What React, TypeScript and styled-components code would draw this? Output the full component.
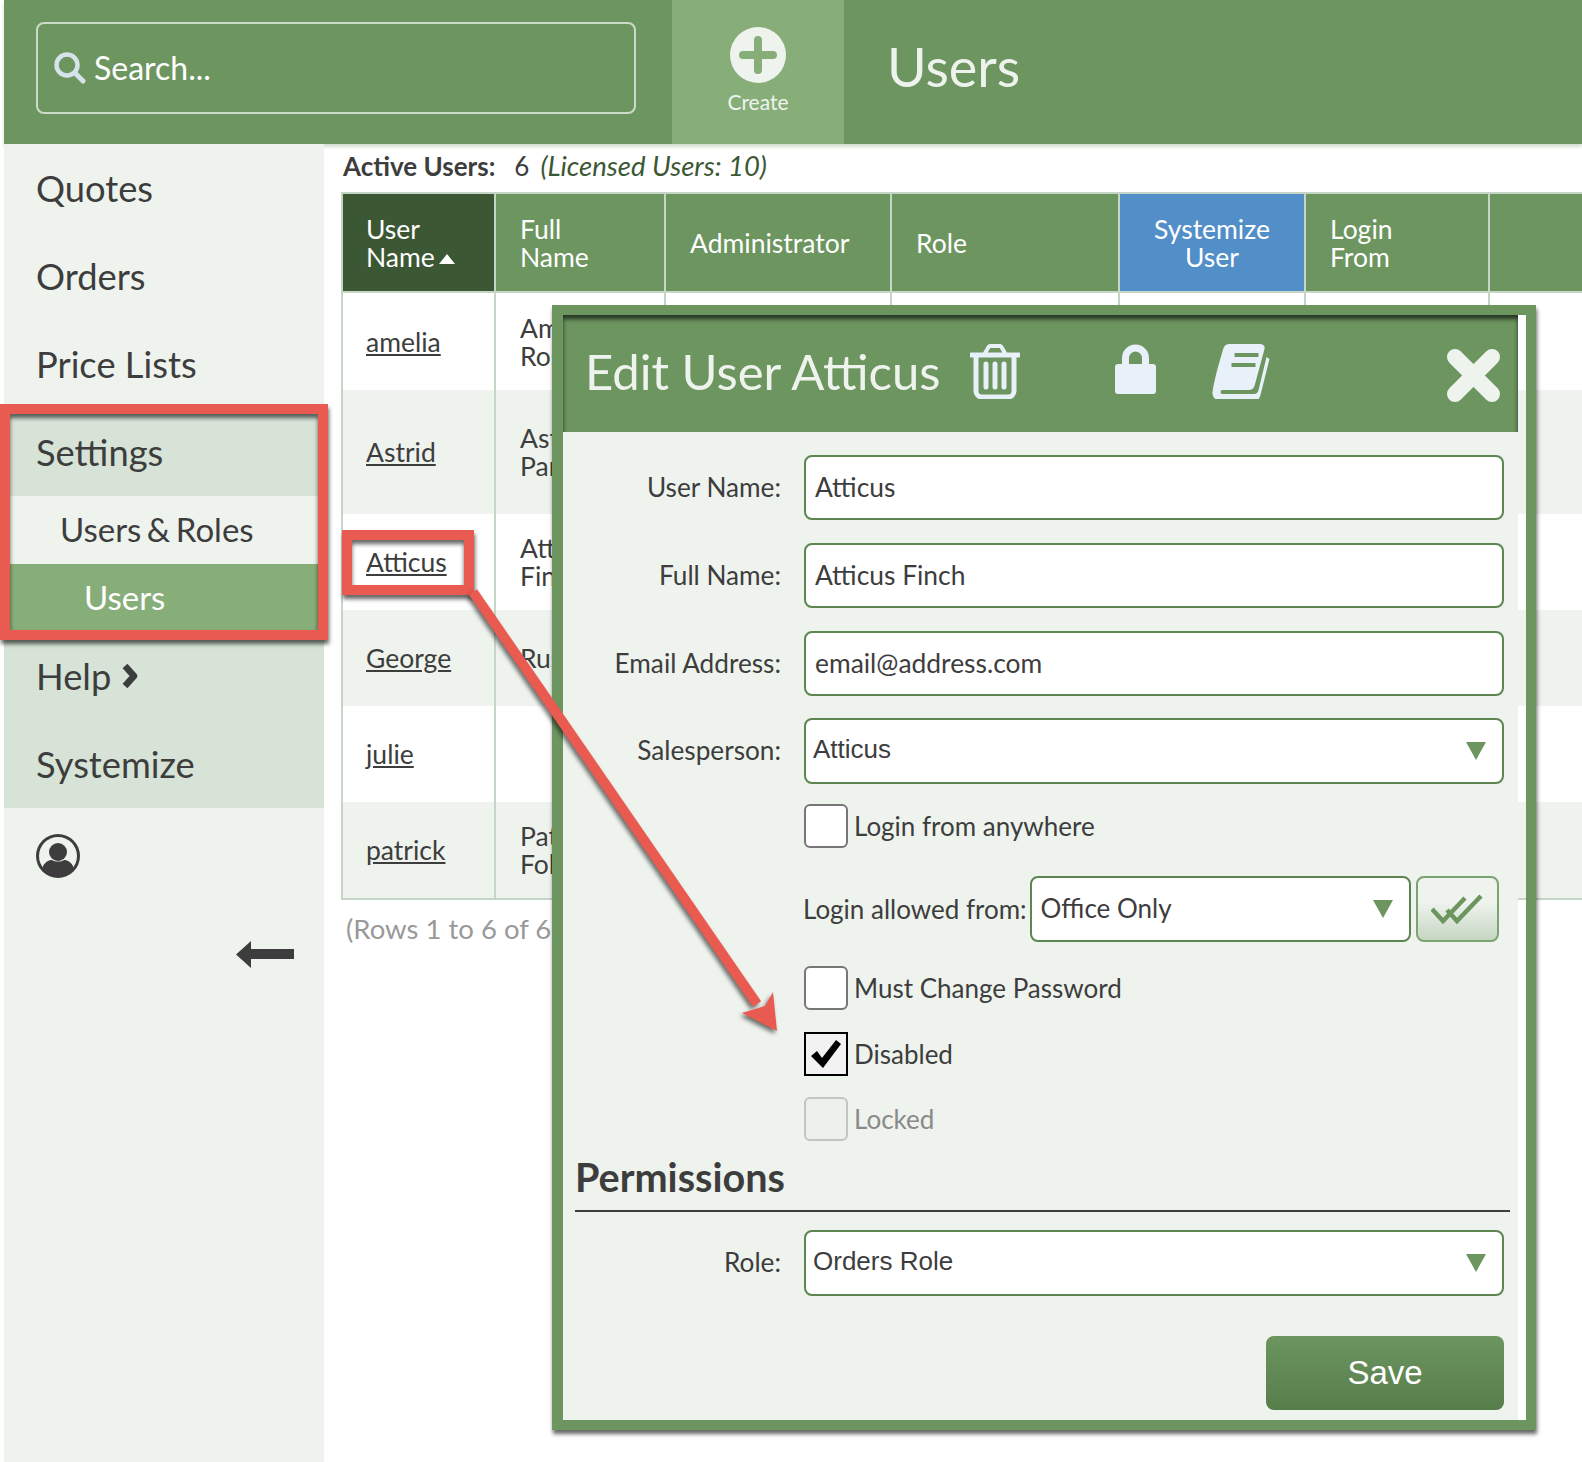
import styled, { createGlobalStyle } from 'styled-components';

const GlobalStyle = createGlobalStyle`
    html, body {
        margin: 0;
        padding: 0;
        background: #fff;
    }
    body {
        font-family: Lato, 'Open Sans', sans-serif;
        color: #3d3d3d;
    }
    * {
        box-sizing: border-box;
    }
`;

const Page = styled.div`
    position: relative;
    width: 1582px;
    height: 1462px;
    overflow: hidden;
    background: #fff;
`;
const TopBar = styled.header`
    display: flex;
    height: 144px;
    margin-left: 4px;
    background: #6c955f;
    box-shadow: 0 3px 3px rgba(108, 149, 95, 0.3);
`;
const SearchArea = styled.div`
    display: flex;
    align-items: flex-start;
    width: 668px;
    padding: 22px 0 0 32px;
`;
const SearchBox = styled.label`
    display: flex;
    align-items: center;
    gap: 6px;
    width: 600px;
    height: 92px;
    padding-left: 16px;
    border: 2px solid #cbdbc6;
    border-radius: 8px;
`;
const SearchInput = styled.input`
    flex: 1;
    min-width: 0;
    padding: 0 2px 2px;
    border: 0;
    outline: 0;
    background: transparent;
    color: #fff;
    font: 32px Lato, sans-serif;
    &::placeholder {
        color: #fff;
        opacity: 1;
    }
`;
const CreateButton = styled.div`
    display: flex;
    flex-direction: column;
    align-items: center;
    width: 172px;
    padding-top: 27px;
    background: #87ae79;
    color: #eef3ed;
    font-size: 21px;
    line-height: 38px;
`;
const PageTitle = styled.h1`
    margin: -10px 0 0 43px;
    align-self: center;
    color: #eef3ed;
    font-size: 54px;
    font-weight: 400;
    line-height: 1;
`;
const Content = styled.div`
    display: flex;
    margin-left: 4px;
`;
const Sidebar = styled.nav`
    width: 320px;
    height: 1318px;
    flex-shrink: 0;
    background: #eef3ed;
`;
const NavItem = styled.div<{ $shaded?: boolean }>`
    display: flex;
    align-items: center;
    gap: 10px;
    height: 88px;
    padding-left: 32px;
    font-size: 36.3px;
    background: ${(props) => (props.$shaded ? '#d6e3d6' : 'transparent')};
`;
const SubItem = styled.div<{ $active?: boolean; $indent: number }>`
    display: flex;
    align-items: center;
    height: 68px;
    padding: 0 0 ${(props) => (props.$active ? 3 : 2)}px ${(props) => props.$indent}px;
    font-size: 33px;
    word-spacing: -3px;
    background: ${(props) => (props.$active ? '#87ae79' : 'transparent')};
    color: ${(props) => (props.$active ? '#fff' : 'inherit')};
`;
const ProfileIcon = styled.div`
    height: 70px;
    padding: 26px 0 0 32px;
`;
const CollapseArrow = styled.div`
    display: flex;
    justify-content: flex-end;
    padding: 63px 30px 0 0;
`;
const Main = styled.main`
    flex: 1;
    min-width: 0;
    padding: 2px 0 0 17px;
`;
const Summary = styled.div`
    display: flex;
    align-items: center;
    gap: 19px;
    height: 46px;
    padding: 0 0 7px 2px;
    font-size: 26px;
    b {
        font-weight: 700;
    }
    em {
        margin-left: -8px;
        color: #3b5733;
        font-size: 27.5px;
    }
`;
const Grid = styled.table`
    width: 1240px;
    table-layout: fixed;
    border-collapse: collapse;
    font-size: 26.5px;
    line-height: 28px;
    border-left: 2px solid #c6d6c6;
    border-bottom: 2px solid #c6d6c6;
    border-top: 2px solid #c6d6c6;
    th:first-child,
    td:first-child {
        padding-left: 23px;
    }
`;
const HeadCell = styled.th<{ $tone?: 'dark' | 'blue'; $center?: boolean }>`
    height: 99px;
    padding: 0 24px;
    border-left: 2px solid #c6d6c6;
    border-bottom: 2px solid #c6d6c6;
    background: ${(props) =>
        props.$tone === 'dark' ? '#3b5733' : props.$tone === 'blue' ? '#528ec7' : '#6c955f'};
    color: #fff;
    font-weight: 400;
    text-align: ${(props) => (props.$center ? 'center' : 'left')};
    svg {
        margin-left: 4px;
        vertical-align: 3px;
    }
`;
const Row = styled.tr<{ $height: number; $tinted?: boolean }>`
    height: ${(props) => props.$height}px;
    background: ${(props) => (props.$tinted ? '#eef3ed' : '#fff')};
`;
const Cell = styled.td`
    padding: 0 24px;
    border-left: 2px solid #c6d6c6;
    vertical-align: middle;
    white-space: nowrap;
    overflow: hidden;
    a {
        color: #3d3d3d;
        text-decoration: underline;
    }
`;
const RowCount = styled.div`
    padding: 12px 0 0 5px;
    color: #999;
    font-size: 27.5px;
    line-height: 34px;
`;
const Modal = styled.section`
    position: absolute;
    left: 552px;
    top: 305px;
    width: 984px;
    height: 1125px;
    border: solid #6c955f;
    border-width: 10px 10px 10px 11px;
    box-shadow: 1px 4px 4px rgba(0, 0, 0, 0.6);
`;
const ModalInner = styled.div`
    width: 955px;
    height: 100%;
    background: #eef3ed;
`;
const ModalHeader = styled.div`
    display: flex;
    align-items: center;
    height: 117px;
    padding: 0 17px 0 22px;
    background: #6c955f;
    box-shadow: inset 0 4px 4px rgba(0, 0, 0, 0.65);
`;
const ModalTitle = styled.h2`
    margin: 0 30px 6px 0;
    color: #eef3ed;
    font-size: 49px;
    font-weight: 400;
    white-space: nowrap;
`;
const HeaderIcon = styled.svg<{ $gap?: number; $lift: number }>`
    flex-shrink: 0;
    margin: 0 0 ${(props) => props.$lift}px ${(props) => props.$gap ?? 0}px;
`;
const CloseIcon = styled.svg`
    flex-shrink: 0;
    margin: 4px 0 0 auto;
`;
const Form = styled.div`
    padding: 23px 14px 0 0;
`;
const Field = styled.div<{ $bottom?: number }>`
    display: grid;
    grid-template-columns: 218px 700px;
    column-gap: 23px;
    align-items: center;
    margin-bottom: ${(props) => props.$bottom ?? 23}px;
`;
const FieldLabel = styled.label`
    padding-bottom: 2px;
    text-align: right;
    font-size: 26.2px;
`;
const TextInput = styled.input`
    width: 100%;
    height: 65px;
    padding: 0 9px 2px;
    border: 2px solid #5c8550;
    border-radius: 8px;
    background: #fff;
    outline: 0;
    color: #3d3d3d;
    font: 26.4px Lato, sans-serif;
`;
const SelectWrap = styled.div<{ $width?: number }>`
    position: relative;
    width: ${(props) => (props.$width ? `${props.$width}px` : '100%')};
    &::after {
        content: '';
        position: absolute;
        top: 24px;
        right: 18px;
        border-style: solid;
        border-width: 18px 10.5px 0;
        border-color: #6c955f transparent transparent;
    }
`;
const Select = styled.select<{ $lato?: boolean }>`
    width: 100%;
    height: 66px;
    padding: 0 0 ${(props) => (props.$lato ? 2 : 4)}px ${(props) => (props.$lato ? 9 : 7)}px;
    border: 2px solid #5c8550;
    border-radius: 8px;
    background: #fff;
    appearance: none;
    outline: 0;
    color: #3d3d3d;
    font: 26px ${(props) => (props.$lato ? 'Lato, sans-serif' : "'Liberation Sans', sans-serif")};
`;
const CheckRow = styled.label<{ $bottom: number; $muted?: boolean }>`
    display: flex;
    align-items: center;
    gap: 6px;
    margin: 0 0 ${(props) => props.$bottom}px 241px;
    font-size: 26px;
    color: ${(props) => (props.$muted ? '#8a8a8a' : 'inherit')};
`;
const CheckBox = styled.span<{ $state?: 'checked' | 'disabled' }>`
    display: flex;
    align-items: center;
    justify-content: center;
    width: 44px;
    height: 44px;
    border-radius: ${(props) => (props.$state === 'checked' ? 0 : 6)}px;
    border: 2px solid
        ${(props) =>
            props.$state === 'checked' ? '#000' : props.$state === 'disabled' ? '#c4c4c4' : '#767676'};
    background: ${(props) =>
        props.$state === 'checked' ? '#f2f2f2' : props.$state === 'disabled' ? '#eef0ee' : '#fff'};
`;
const LoginRow = styled.div`
    display: flex;
    align-items: center;
    gap: 3px;
    margin: 0 0 24px 240px;
    font-size: 26px;
    white-space: nowrap;
`;
const ConfirmButton = styled.div`
    display: flex;
    align-items: center;
    justify-content: center;
    width: 83px;
    height: 66px;
    margin-left: 2px;
    border: 2px solid #7da372;
    border-radius: 8px;
    background: linear-gradient(#eef3ed 40%, #c6d6c2);
`;
const SectionTitle = styled.h3`
    margin: 0 0 18px 12px;
    width: 935px;
    height: 58px;
    border-bottom: 2px solid #3d3d3d;
    font-size: 39.6px;
    font-weight: 700;
    line-height: 46px;
`;
const Actions = styled.div`
    display: flex;
    justify-content: flex-end;
    margin-top: 40px;
`;
const SaveButton = styled.button`
    width: 238px;
    height: 74px;
    border: 0;
    border-radius: 8px;
    background: linear-gradient(#6c955f, #577d4b);
    color: #fff;
    font: 33px 'Liberation Sans', sans-serif;
`;
const Callout = styled.div<{ $left: number; $top: number; $w: number; $h: number }>`
    position: absolute;
    left: ${(props) => props.$left}px;
    top: ${(props) => props.$top}px;
    width: ${(props) => props.$w}px;
    height: ${(props) => props.$h}px;
    border: 10px solid #e95a50;
    box-shadow:
        1px 4px 4px rgba(0, 0, 0, 0.6),
        inset 0 4px 4px rgba(0, 0, 0, 0.6);
`;
const ArrowLayer = styled.svg`
    position: absolute;
    left: 0;
    top: 0;
    pointer-events: none;
    filter: drop-shadow(-2px 3px 2px rgba(0, 0, 0, 0.55));
`;

const users = [
    { id: 'amelia', full: ['Amelia', 'Rose'], height: 98, tinted: false },
    { id: 'Astrid', full: ['Astrid', 'Parker'], height: 124, tinted: true },
    { id: 'Atticus', full: ['Atticus', 'Finch'], height: 96, tinted: false },
    { id: 'George', full: ['Russ'], height: 96, tinted: true },
    { id: 'julie', full: [], height: 96, tinted: false },
    { id: 'patrick', full: ['Patrick', 'Foley'], height: 97, tinted: true },
];

const columns = [153, 170, 226, 228, 186, 184, 93];

function App() {
    return (
        <Page>
            <GlobalStyle />
            <TopBar>
                <SearchArea>
                    <SearchBox>
                        <svg width="32" height="32" viewBox="0 0 32 32" fill="none" stroke="#d6e3ea">
                            <circle cx="13" cy="13" r="10.5" strokeWidth="4.5" />
                            <path d="M21 21l8 8" strokeWidth="5" strokeLinecap="round" />
                        </svg>
                        <SearchInput placeholder="Search..." />
                    </SearchBox>
                </SearchArea>
                <CreateButton>
                    <svg width="56" height="56" viewBox="0 0 56 56">
                        <circle cx="28" cy="28" r="28" fill="#eef3ed" />
                        <path d="M28 13v30M13 28h30" stroke="#87ae79" strokeWidth="8" strokeLinecap="round" />
                    </svg>
                    Create
                </CreateButton>
                <PageTitle>Users</PageTitle>
            </TopBar>
            <Content>
                <Sidebar>
                    <NavItem>Quotes</NavItem>
                    <NavItem>Orders</NavItem>
                    <NavItem>Price Lists</NavItem>
                    <NavItem $shaded>Settings</NavItem>
                    <SubItem $indent={56}>Users &amp; Roles</SubItem>
                    <SubItem $indent={80} $active>
                        Users
                    </SubItem>
                    <NavItem $shaded>
                        Help
                        <svg width="18" height="28" viewBox="0 0 18 28" fill="none">
                            <path d="M4 4l9 10-9 10" stroke="#3d3d3d" strokeWidth="6.500" strokeLinejoin="round" />
                        </svg>
                    </NavItem>
                    <NavItem $shaded>Systemize</NavItem>
                    <ProfileIcon>
                        <svg width="44" height="44" viewBox="0 0 44 44">
                            <circle cx="22" cy="22" r="22" fill="#3d3d3d" />
                            <circle cx="22" cy="22" r="19" fill="#eef3ed" />
                            <circle cx="22" cy="18" r="9" fill="#3d3d3d" />
                            <path d="M6 35c2-8 8-9 10-9 3 2 9 2 12 0 2 0 8 1 10 9a22 22 0 0 1-32 0z" fill="#3d3d3d" />
                        </svg>
                    </ProfileIcon>
                    <CollapseArrow>
                        <svg width="58" height="27" viewBox="0 0 58 27">
                            <path d="M0 13.5L15 0v8h43v10H15v9z" fill="#3d3d3d" />
                        </svg>
                    </CollapseArrow>
                </Sidebar>
                <Main>
                    <Summary>
                        <b>Active Users:</b>
                        <span>6</span>
                        <em>(Licensed Users: 10)</em>
                    </Summary>
                    <Grid>
                        <colgroup>
                            {columns.map((w) => (
                                <col key={w} style={{ width: w }} />
                            ))}
                        </colgroup>
                        <thead>
                            <tr>
                                <HeadCell $tone="dark">
                                    User
                                    <br />
                                    Name
                                    <svg width="16" height="10" viewBox="0 0 16 10">
                                        <path d="M8 0l8 10H0z" fill="#fff" />
                                    </svg>
                                </HeadCell>
                                <HeadCell>
                                    Full
                                    <br />
                                    Name
                                </HeadCell>
                                <HeadCell>Administrator</HeadCell>
                                <HeadCell>Role</HeadCell>
                                <HeadCell $tone="blue" $center>
                                    Systemize
                                    <br />
                                    User
                                </HeadCell>
                                <HeadCell>
                                    Login
                                    <br />
                                    From
                                </HeadCell>
                                <HeadCell />
                            </tr>
                        </thead>
                        <tbody>
                            {users.map((user) => (
                                <Row key={user.id} $height={user.height} $tinted={user.tinted}>
                                    <Cell>
                                        <a href="#">{user.id}</a>
                                    </Cell>
                                    <Cell>
                                        {user.full.map((part) => (
                                            <div key={part}>{part}</div>
                                        ))}
                                    </Cell>
                                    <Cell />
                                    <Cell />
                                    <Cell />
                                    <Cell />
                                    <Cell />
                                </Row>
                            ))}
                        </tbody>
                    </Grid>
                    <RowCount>(Rows 1 to 6 of 6)</RowCount>
                </Main>
            </Content>

            <Modal>
                <ModalInner>
                    <ModalHeader>
                        <ModalTitle>Edit User Atticus</ModalTitle>
                        <HeaderIcon $lift={4} width="50" height="55" viewBox="0 0 50 55" fill="none" stroke="#e8f0f9">
                            <path d="M1 11h48" strokeWidth="5" strokeLinecap="round" />
                            <path d="M14 11l4-7a3 3 0 0 1 2-2h10a3 3 0 0 1 2 2l4 7" strokeWidth="4" />
                            <path d="M6 12v35a6 6 0 0 0 6 6h26a6 6 0 0 0 6-6V12" strokeWidth="5" />
                            <path d="M16 20v23M25 20v23M34 20v23" strokeWidth="5" strokeLinecap="round" />
                        </HeaderIcon>
                        <HeaderIcon $lift={9} $gap={95} width="41" height="50" viewBox="0 0 41 50">
                            <path
                                d="M7 21v-7a13.500 13.500 0 0 1 27 0v7h-7v-7a6.500 6.500 0 0 0-13 0v7z"
                                fill="#e8f0f9"
                            />
                            <rect x="0" y="20" width="41" height="30" rx="3" fill="#e8f0f9" />
                        </HeaderIcon>
                        <HeaderIcon $lift={4} $gap={56} width="60" height="55" viewBox="0 0 59 55">
                            <path
                                d="M16 0h32a4 4 0 0 1 4 5L42 42a6 6 0 0 1-6 4H9a3 3 0 0 0 0 4h33a5 5 0 0 0 4-4l8-33 3 2-9 36a7 7 0 0 1-7 6H8a8 8 0 0 1-8-9C2 34 8 14 11 4a6 6 0 0 1 5-4z"
                                fill="#e8f0f9"
                            />
                            <path d="M22 11h24M19 21h24" stroke="#6c955f" strokeWidth="4" />
                        </HeaderIcon>
                        <CloseIcon width="55" height="55" viewBox="0 0 55 55">
                            <path d="M9 9l37 37M46 9L9 46" stroke="#eef3ed" strokeWidth="16" strokeLinecap="round" />
                        </CloseIcon>
                    </ModalHeader>
                    <Form>
                        <Field>
                            <FieldLabel>User Name:</FieldLabel>
                            <TextInput defaultValue="Atticus" />
                        </Field>
                        <Field>
                            <FieldLabel>Full Name:</FieldLabel>
                            <TextInput defaultValue="Atticus Finch" />
                        </Field>
                        <Field $bottom={22}>
                            <FieldLabel>Email Address:</FieldLabel>
                            <TextInput defaultValue="email@address.com" />
                        </Field>
                        <Field $bottom={20}>
                            <FieldLabel>Salesperson:</FieldLabel>
                            <SelectWrap>
                                <Select defaultValue="Atticus">
                                    <option>Atticus</option>
                                </Select>
                            </SelectWrap>
                        </Field>
                        <CheckRow $bottom={28}>
                            <CheckBox />
                            Login from anywhere
                        </CheckRow>
                        <LoginRow>
                            Login allowed from:
                            <SelectWrap $width={381}>
                                <Select $lato defaultValue="Office Only">
                                    <option>Office Only</option>
                                </Select>
                            </SelectWrap>
                            <ConfirmButton>
                                <svg width="52" height="30" viewBox="0 0 52 30" fill="none" stroke="#6c955f">
                                    <path d="M1 15l11 12L34 4" strokeWidth="4.500" />
                                    <path d="M16 16l10 11L50 2" strokeWidth="4.500" />
                                </svg>
                            </ConfirmButton>
                        </LoginRow>
                        <CheckRow $bottom={22}>
                            <CheckBox />
                            Must Change Password
                        </CheckRow>
                        <CheckRow $bottom={21}>
                            <CheckBox $state="checked">
                                <svg width="32" height="30" viewBox="0 0 32 30">
                                    <path d="M1 17l6-5 5 7L26 1l5 4-18 24z" fill="#000" />
                                </svg>
                            </CheckBox>
                            Disabled
                        </CheckRow>
                        <CheckRow $bottom={13} $muted>
                            <CheckBox $state="disabled" />
                            Locked
                        </CheckRow>
                        <SectionTitle>Permissions</SectionTitle>
                        <Field $bottom={0}>
                            <FieldLabel>Role:</FieldLabel>
                            <SelectWrap>
                                <Select defaultValue="Orders Role">
                                    <option>Orders Role</option>
                                </Select>
                            </SelectWrap>
                        </Field>
                        <Actions>
                            <SaveButton>Save</SaveButton>
                        </Actions>
                    </Form>
                </ModalInner>
            </Modal>

            <Callout $left={0} $top={404} $w={328} $h={236} />
            <Callout $left={342} $top={530} $w={132} $h={65} />
            <ArrowLayer width="1582" height="1462" viewBox="0 0 1582 1462">
                <path d="M473 592L757 1004" stroke="#e95a50" strokeWidth="10" />
                <path d="M777 1031L773 992 765 1006 752 1010 742 1013z" fill="#e95a50" />
            </ArrowLayer>
        </Page>
    );
}

export default App;
